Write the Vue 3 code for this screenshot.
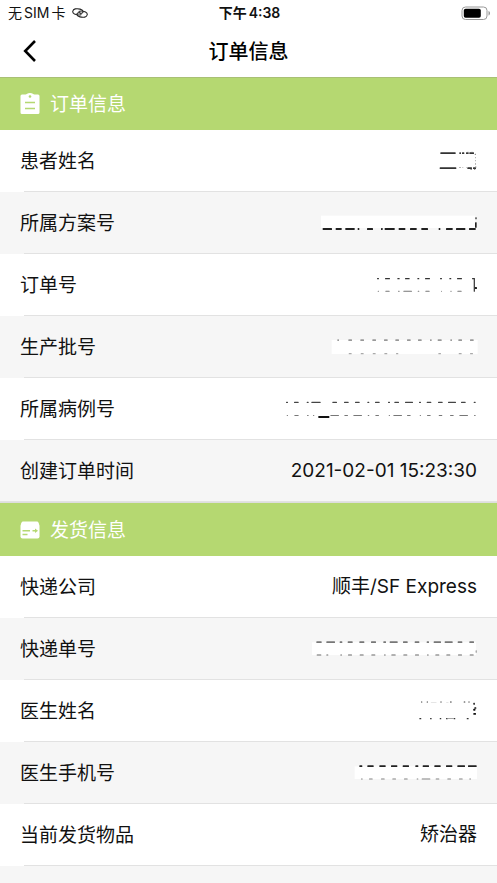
<script setup>
// Concealed values keep only the slivers of ink left around the cover.
// box: viewBox origin in thirds of a pixel; cover: [x, y, w, h];
// lines: strips of marks sharing y, height and shade, each mark [x, w].
const orderRows = [
  {
    label: '患者姓名',
    ink: {
      box: [-69, 39],
      lines: [
        { y: 52, h: 5, c: '#333', marks: [[421, 46], [478, 5], [486, 7], [498, 8], [508, 14]] },
        { y: 97, h: 5, c: '#333', marks: [[419, 50], [502, 14], [519, 9]] },
        { y: 96, h: 3, c: '#aaa', marks: [[477, 6], [487, 3], [499, 4]] },
        { y: 50, h: 2, c: '#888', marks: [[502, 4], [514, 4]] },
        { y: 56, h: 3, c: '#666', marks: [[524, 4]] },
        { y: 66, h: 4, c: '#777', marks: [[526, 2]] },
        { y: 75, h: 4, c: '#777', marks: [[526, 2]] },
        { y: 84, h: 5, c: '#777', marks: [[526, 2]] },
        { y: 94, h: 4, c: '#777', marks: [[526, 3]] },
        { y: 101, h: 3, c: '#666', marks: [[511, 5], [522, 4]] },
      ],
    },
  },
  {
    label: '所属方案号',
    ink: {
      box: [-69, 225],
      cover: [63, 242, 462, 37],
      lines: [
        { y: 279, h: 6, c: '#222', marks: [[68, 28], [107, 18], [136, 28], [173, 5], [201, 18], [243, 5], [254, 30], [296, 20], [330, 20], [364, 20], [416, 5], [438, 20], [468, 28], [507, 20]] },
        { y: 247, h: 6, c: '#333', marks: [[526, 4]] },
        { y: 262, h: 16, c: '#222', marks: [[525, 5]] },
      ],
    },
  },
  {
    label: '订单号',
    ink: {
      box: [21, 51],
      lines: [
        { y: 69, h: 4, c: '#333', marks: [[321, 6], [345, 15], [382, 7], [405, 14], [442, 6], [465, 15], [510, 6], [538, 6], [561, 15], [606, 8]] },
        { y: 107, h: 3, c: '#777', marks: [[323, 4], [346, 13], [384, 5], [400, 26], [443, 5], [466, 13], [513, 3], [541, 4], [562, 13]] },
        { y: 69, h: 41, c: '#444', marks: [[611, 4]] },
        { y: 96, h: 6, c: '#222', marks: [[614, 7]] },
      ],
    },
  },
  {
    label: '生产批号',
    ink: {
      box: [21, 237],
      cover: [185, 255, 438, 42],
      lines: [
        { y: 253, h: 5, c: '#999', marks: [[202, 5], [235, 11], [271, 11], [307, 11], [342, 11], [376, 11], [411, 11], [444, 11], [480, 5], [503, 12], [541, 5], [565, 11], [600, 11]] },
        { y: 294, h: 4, c: '#aaa', marks: [[236, 9], [272, 9], [308, 9], [343, 9], [378, 7], [505, 8], [566, 9], [600, 9]] },
      ],
    },
  },
  {
    label: '所属病例号',
    ink: {
      box: [21, 63],
      lines: [
        { y: 80, h: 4, c: '#444', marks: [[48, 6], [72, 14], [110, 6], [124, 28], [187, 14], [222, 14], [255, 14], [292, 6], [315, 14], [354, 6], [373, 14], [405, 24], [447, 6], [470, 14], [504, 14], [534, 24], [573, 14], [611, 6]] },
        { y: 120, h: 3, c: '#777', marks: [[50, 4], [73, 13], [111, 5], [129, 4], [181, 26], [223, 11], [250, 26], [293, 5], [316, 11], [356, 4], [370, 26], [411, 11], [449, 4], [471, 11], [506, 11], [540, 11], [568, 26], [612, 5]] },
        { y: 123, h: 6, c: '#111', marks: [[145, 33]] },
      ],
    },
  },
  { label: '创建订单时间', value: '2021-02-01 15:23:30' },
]

const shippingRows = [
  { label: '快递公司', value: '顺丰/SF Express' },
  {
    label: '快递单号',
    ink: {
      box: [-39, 48],
      cover: [66, 67, 492, 38],
      lines: [
        { y: 64, h: 5, c: '#777', marks: [[79, 16], [109, 26], [149, 8], [173, 15], [208, 15], [243, 15], [280, 8], [299, 24], [339, 14], [374, 14], [410, 7], [431, 22], [464, 24], [503, 14], [538, 14]] },
        { y: 103, h: 4, c: '#999', marks: [[80, 14], [109, 6], [151, 5], [174, 12], [209, 12], [244, 12], [282, 5], [304, 13], [340, 12], [375, 12], [411, 5], [436, 12], [469, 12], [504, 12], [539, 12]] },
        { y: 91, h: 7, c: '#888', marks: [[557, 3]] },
      ],
    },
  },
  {
    label: '医生姓名',
    ink: {
      box: [-39, 234],
      lines: [
        { y: 244, h: 4, c: '#777', marks: [[393, 4], [410, 4], [451, 4], [480, 5], [521, 5], [535, 4]] },
        { y: 246, h: 2, c: '#ddd', marks: [[422, 18], [468, 8]] },
        { y: 294, h: 4, c: '#333', marks: [[388, 6], [420, 5], [449, 5], [468, 5], [491, 5], [530, 6]] },
        { y: 295, h: 2, c: '#888', marks: [[472, 20]] },
        { y: 248, h: 6, c: '#333', marks: [[550, 5]] },
        { y: 262, h: 4, c: '#111', marks: [[553, 6]] },
        { y: 266, h: 6, c: '#111', marks: [[550, 6]] },
        { y: 279, h: 5, c: '#111', marks: [[550, 8]] },
      ],
    },
  },
  {
    label: '医生手机号',
    ink: {
      box: [-39, 60],
      cover: [194, 79, 367, 38],
      lines: [
        { y: 76, h: 5, c: '#222', marks: [[208, 9], [232, 19], [268, 19], [303, 19], [338, 19], [376, 9], [398, 19], [433, 19], [468, 19], [502, 23], [534, 26]] },
        { y: 115, h: 4, c: '#aaa', marks: [[213, 5], [237, 11], [273, 11], [307, 11], [342, 11], [380, 5], [395, 26], [437, 11], [472, 11], [507, 11], [538, 5]] },
      ],
    },
  },
  { label: '当前发货物品', value: '矫治器' },
]

const sections = [
  { title: '订单信息', icon: 'clipboard', rows: orderRows },
  { title: '发货信息', icon: 'parcel', rows: shippingRows },
]
</script>

<template>
  <div class="page">
    <div class="status">
      <div class="carrier">
        <span>无<span class="sim">SIM</span>卡</span>
        <svg class="link" viewBox="0 0 16 10" aria-hidden="true">
          <path d="M9.4 6.4C7.7 7.3 4.8 7 2.5 6.1C-.3 4.8.5 1.5 3.2.9C6 .3 10.8 1.3 11.1 3.5C11.3 5 9.4 5.7 7.7 5.1" />
          <path d="M6.6 3.6C8.3 2.7 11.2 3 13.5 3.9C16.3 5.2 15.5 8.5 12.8 9.1C10 9.7 5.2 8.7 4.9 6.5C4.7 5 6.6 4.3 8.3 4.9" />
        </svg>
      </div>
      <div class="clock">下午<span>4:38</span></div>
      <svg class="battery" viewBox="0 0 30 15" aria-hidden="true">
        <rect x="1" y="1" width="25" height="12.5" rx="3.5" fill="none" stroke="#999" />
        <rect x="2.8" y="2.8" width="17" height="9" rx="1.8" fill="#000" />
        <path d="M27.5 5v4.5c1-.4 1.5-1.2 1.5-2.25S28.5 5.4 27.5 5z" fill="#999" />
      </svg>
    </div>

    <header class="nav">
      <button class="back" type="button" aria-label="返回">
        <svg viewBox="0 0 14 24" aria-hidden="true"><path d="M12 2L2.2 12L12 22" /></svg>
      </button>
      <h1>订单信息</h1>
    </header>

    <section v-for="section in sections" :key="section.title" class="section">
      <h2>
        <svg v-if="section.icon === 'clipboard'" viewBox="0 0 20 22" aria-hidden="true">
          <path d="M2 1.5H5.5C6.7 1.5 7.3 0 10 0S13.3 1.5 14.5 1.5H18Q19.5 1.5 19.5 3V19.5Q19.5 21 18 21H2Q.5 21 .5 19.5V3Q.5 1.5 2 1.5Z" fill="#fff" />
          <circle cx="10" cy="3.5" r="1.3" fill="#b5d871" />
          <path d="M5 9.5H15M5 15.5H15" stroke="#b5d871" stroke-width="1.4" />
        </svg>
        <svg v-else viewBox="0 0 20 22" aria-hidden="true">
          <path d="M3 2.5H17Q19 2.5 19.3 7H.7Q1 2.5 3 2.5Z" fill="#fff" />
          <path d="M.5 6.5H19.5V17.5Q19.5 19.5 17.5 19.5H2.5Q.5 19.5 .5 17.5Z" fill="#fff" />
          <path d="M2.5 11.7H10M2.5 15.5H7.5M12.5 11.7H16" stroke="#b5d871" stroke-width="1.4" />
          <path d="M15 9.5L18 11.7L15 13.9Z" fill="#b5d871" />
        </svg>
        <span>{{ section.title }}</span>
      </h2>
      <dl>
        <div v-for="row in section.rows" :key="row.label" class="row">
          <dt>{{ row.label }}</dt>
          <dd>
            <svg
              v-if="row.ink"
              class="ink"
              :viewBox="`${row.ink.box[0]} ${row.ink.box[1]} 600 75`"
              role="img"
              aria-label="已隐藏"
            >
              <rect
                v-if="row.ink.cover"
                :x="row.ink.cover[0]"
                :y="row.ink.cover[1]"
                :width="row.ink.cover[2]"
                :height="row.ink.cover[3]"
                fill="#fff"
              />
              <g v-for="(line, i) in row.ink.lines" :key="i" :fill="line.c">
                <rect
                  v-for="mark in line.marks"
                  :key="mark[0]"
                  :x="mark[0]"
                  :y="line.y"
                  :width="mark[1]"
                  :height="line.h"
                  rx="1.5"
                />
              </g>
            </svg>
            <template v-else>{{ row.value }}</template>
          </dd>
        </div>
      </dl>
    </section>
  </div>
</template>

<style>
body {
  margin: 0;
  background: #f6f6f6;
}
</style>

<style scoped>
.page {
  color: #111;
  font-family: Inter, "Noto Sans CJK SC", sans-serif;
}
.status {
  display: grid;
  grid-template-columns: 1fr auto 1fr;
  align-items: center;
  height: 26px;
  padding: 0 6px 0 8px;
  background: #fff;
  font-size: 14px;
  line-height: 20px;
}
.carrier {
  display: flex;
  align-items: center;
  gap: 7px;
}
.sim {
  margin: 0 2px;
}
.link {
  width: 16px;
  height: 10px;
  fill: none;
  stroke: #222;
  stroke-width: 1.1;
}
.clock {
  display: flex;
  gap: 2px;
  font-weight: 600;
}
.battery {
  justify-self: end;
  width: 30px;
  height: 15px;
}
.nav {
  display: grid;
  grid-template-columns: 60px 1fr 60px;
  align-items: center;
  height: 51px;
  background: #fff;
}
.back {
  display: flex;
  justify-content: center;
  padding: 8px 0 10px;
  border: 0;
  background: none;
}
.back svg {
  width: 14px;
  height: 24px;
  fill: none;
  stroke: #000;
  stroke-width: 2.6;
}
h1 {
  margin: 0;
  color: #000;
  font-size: 20px;
  font-weight: 500;
  line-height: 28px;
  text-align: center;
}
h2 {
  display: flex;
  align-items: center;
  gap: 10px;
  height: 52px;
  margin: 0;
  padding: 0 20px;
  border-top: 1px solid #a9c075;
  background: #b5d871;
  color: #fff;
  font-size: 19px;
  font-weight: 400;
  line-height: 28px;
}
.section + .section h2 {
  height: 53px;
  border-top-color: #dedede;
}
h2 svg {
  width: 20px;
  height: 22px;
}
h2 span,
dt {
  padding-top: 2px;
}
dl {
  margin: 0;
}
.row {
  display: flex;
  align-items: center;
  justify-content: space-between;
  box-sizing: border-box;
  height: 62px;
  padding: 0 20px 1px;
  background: linear-gradient(#e2e2e2, #e2e2e2) 24px 100% / 100% 1px no-repeat #fff;
  font-size: 19px;
  line-height: 28px;
}
.row:nth-child(even) {
  background-color: #f6f6f6;
}
.section:first-of-type .row:last-child {
  background-position: 0 100%;
}
dd {
  display: flex;
  margin: 0;
}
.ink {
  width: 200px;
  height: 25px;
  overflow: visible;
}
</style>
